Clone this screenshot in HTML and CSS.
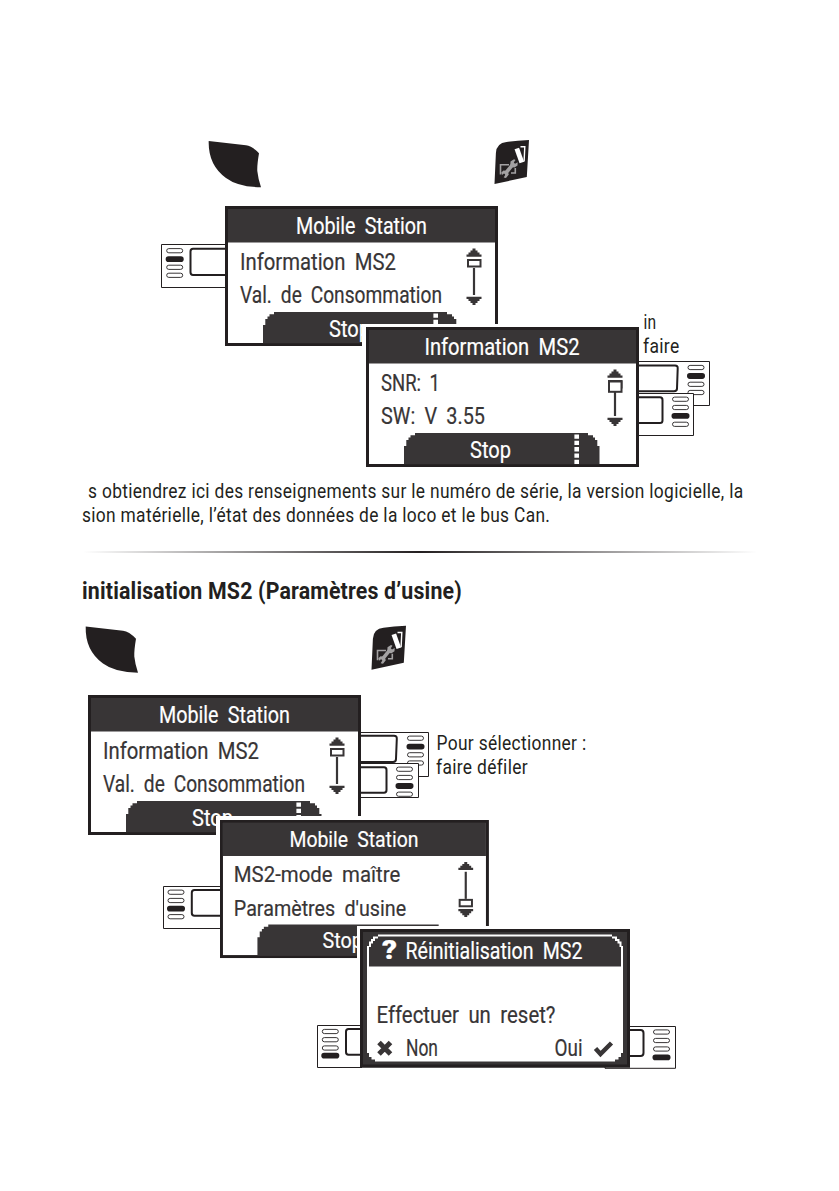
FILE: index.html
```html
<!DOCTYPE html>
<html lang="fr">
<head>
<meta charset="utf-8">
<title>Mobile Station 2</title>
<link rel="stylesheet" href="styles.css">
</head>
<body>
<svg class="defs" width="0" height="0" aria-hidden="true">
  <defs>
    <path id="wedge" d="M.7 0L38 4.3Q44 5 51 12.3Q49 24 49.3 30Q50 37 53 46.3Q30 46 18 37Q0 24 .7 0Z" fill="#231f20"/>
    <g id="toolkey">
      <path d="M0 44L1.4 13Q2 3 12 2Q22 .5 34.5 0L32.3 37Z" fill="#231f20"/>
      <path d="M6 34.5V24.8H14.5M20.8 28V33H16.5" fill="none" stroke="#a3a1a2" stroke-width="1.6"/>
      <path d="M10.5 34L19 23.5" stroke="#a3a1a2" stroke-width="3.6"/>
      <path d="M6.8 32.5L9 30.5L13 31L14.3 34.5L11.5 38L9.2 37.5L10.8 34.8L9.8 33.3L7.5 35ZM15.8 25.5L16 21.5L19.5 19.2L21 20L19.3 22.5L20.5 23.7L23.2 22.3L23 25.5L20 27.5L17.5 27.3Z" fill="#a3a1a2"/>
      <path d="M22.3 8.5L27.3 22.5" stroke="#fff" stroke-width="4.8"/>
      <path d="M26 6.8H30.3L29.6 21.5" fill="none" stroke="#fff" stroke-width="1.4"/>
    </g>
    <rect id="pill" x="-8" y="-2.1" width="16" height="4.2" rx="2.1" fill="#fff" stroke="#231f20" stroke-width=".9"/>
    <rect id="pill-on" x="-9" y="-2.9" width="18" height="5.8" rx="2.8" fill="#231f20"/>
    <path id="up" d="M-1.5 0H1.5V2H3.5V4H5.5V6H7.5V8.2H-7.5V6H-5.5V4H-3.5V2H-1.5Z" fill="#383536"/>
    <g id="frame">
      <rect x="1.5" y="1.5" width="270" height="137" fill="#fff" stroke="#231f20" stroke-width="3"/>
      <rect x="3" y="3" width="267" height="33.5" fill="#383536"/>
      <path d="M38 137.3V119H40.3V113H42.5V110.5H44.5V108.3H49V106H222V108.3H227V110.5H229V113H231.3V119H233.5V137.3Z" fill="#383536"/>
      <path d="M210.7 107.5V137" stroke="#fff" stroke-width="4.6" stroke-dasharray="4.3 2"/>
    </g>
    <g id="scroll-top">
      <use href="#up" x="249" y="42.5"/>
      <path d="M249 62V89" stroke="#383536" stroke-width="2.2"/>
      <rect x="243" y="54" width="12.5" height="6.5" fill="#fff" stroke="#383536" stroke-width="2"/>
      <use href="#up" transform="translate(249 99) scale(1 -1)"/>
    </g>
  </defs>
</svg>

<main class="page">
  <svg class="figure figure-info" viewBox="0 130 839 345">
    <use href="#wedge" x="208" y="141"/>
    <use href="#toolkey" x="494.5" y="140"/>

    <g class="unit">
      <path d="M228 244.5H161.5V287.5H228"/>
      <path class="button" d="M228 248.8H193Q190.5 248.8 190.5 251.5V272.3Q190.5 275 193 275H228"/>
      <use href="#pill" x="174.7" y="250.7"/><use href="#pill-on" x="174.7" y="259.2"/><use href="#pill" x="174.7" y="267.3"/><use href="#pill" x="174.7" y="275.3"/>
    </g>
    <g transform="translate(225 206)">
      <use href="#frame"/><use href="#scroll-top"/>
      <text class="lcd inv" x="71" y="28" textLength="131">Mobile Station</text>
      <text class="lcd" x="15" y="63.5" textLength="156">Information MS2</text>
      <text class="lcd" x="15" y="97" textLength="202">Val. de Consommation</text>
      <text class="lcd inv" x="104" y="130.5" textLength="41">Stop</text>
    </g>

    <path class="halo" d="M362 324H500V340H370V348H362Z"/>
    <g class="unit">
      <path d="M636 361.5H709.5V405.5H636Z"/>
      <path class="button" d="M636 365.5H675Q678 365.5 677.7 368.5L677 388.5Q677 391.3 674 391.3H636"/>
      <use href="#pill" x="696" y="367.5"/><use href="#pill-on" x="696" y="376"/><use href="#pill" x="696" y="384.3"/><use href="#pill" x="696" y="392.5"/>
      <path d="M636 393.5H693.5V435.5H636Z"/>
      <path class="button" d="M636 397.3H660Q662.5 397.3 662.5 400V420.5Q662.5 423 660 423H636"/>
      <use href="#pill" x="680.5" y="399.2"/><use href="#pill" x="680.5" y="407.5"/><use href="#pill-on" x="680.5" y="415.8"/><use href="#pill" x="680.5" y="424.3"/>
    </g>
    <g transform="translate(366 327)">
      <use href="#frame"/><use href="#scroll-top"/>
      <rect x="243" y="54.5" width="12.5" height="10.3" fill="#fff" stroke="#383536" stroke-width="2"/>
      <text class="lcd inv" x="58.5" y="28" textLength="155">Information MS2</text>
      <text class="lcd" x="15" y="63.5" textLength="59">SNR: 1</text>
      <text class="lcd" x="15" y="97" textLength="104">SW: V 3.55</text>
      <text class="lcd inv" x="104" y="130.5" textLength="41">Stop</text>
    </g>
    <text class="note" x="643.5" y="329.3" textLength="13">in</text>
    <text class="note" x="643" y="353" textLength="36.5">faire</text>
  </svg>

  <p class="copy"><span class="line first">s obtiendrez ici des renseignements sur le numéro de série, la version logicielle, la</span>
  <span class="line second">sion matérielle, l’état des données de la loco et le bus Can.</span></p>
  <hr class="rule">
  <h2 class="title"><span>initialisation MS2 (Paramètres d’usine)</span></h2>

  <svg class="figure figure-reset" viewBox="0 620 839 455">
    <use href="#wedge" x="85" y="626.5"/>
    <use href="#toolkey" x="371.5" y="625.7"/>

    <g class="unit">
      <path d="M358 732.5H428.5V776.5H358Z"/>
      <path class="button" d="M358 735.8H394Q397 735.8 396.8 738.8L396 759Q396 762 393 762H358"/>
      <use href="#pill" x="415.5" y="738.2"/><use href="#pill-on" x="415.5" y="746.6"/><use href="#pill" x="415.5" y="754.8"/><use href="#pill" x="415.5" y="763"/>
      <path d="M358 763.5H418.5V797.5H358Z"/>
      <path class="button" d="M358 767.3H384Q386.5 767.3 386.5 770V790Q386.5 792.8 384 792.8H358"/>
      <use href="#pill" x="404.5" y="769.2"/><use href="#pill" x="404.5" y="777.5"/><use href="#pill-on" x="404.5" y="786"/><use href="#pill" x="404.5" y="794.2"/>
    </g>
    <g transform="translate(88 695)">
      <use href="#frame"/><use href="#scroll-top"/>
      <text class="lcd inv" x="71" y="28" textLength="131">Mobile Station</text>
      <text class="lcd" x="15" y="63.5" textLength="156">Information MS2</text>
      <text class="lcd" x="15" y="97" textLength="202">Val. de Consommation</text>
      <text class="lcd inv" x="104" y="130.5" textLength="41">Stop</text>
    </g>
    <text class="note" x="436.5" y="750" textLength="150">Pour sélectionner :</text>
    <text class="note" x="436" y="774" textLength="92">faire défiler</text>

    <path class="halo" d="M216 816H364V830H224V838H216Z"/>
    <g class="unit">
      <path d="M222 886.5H163.5V928.5H222"/>
      <path class="button" d="M222 890H194.5Q191.8 890 191.8 892.7V913Q191.8 915.8 194.5 915.8H222"/>
      <use href="#pill" x="176" y="892.2"/><use href="#pill" x="176" y="900.5"/><use href="#pill-on" x="176" y="908.7"/><use href="#pill" x="176" y="916.7"/>
    </g>
    <g transform="translate(220 820) scale(.985 .986)">
      <use href="#frame"/>
      <use href="#up" x="249.5" y="42.5"/>
      <path d="M249.5 52.5V80" stroke="#383536" stroke-width="2.2"/>
      <rect x="243.3" y="81" width="12.5" height="6.5" fill="#fff" stroke="#383536" stroke-width="2"/>
      <use href="#up" transform="translate(249.5 98.5) scale(1 -1)"/>
      <text class="lcd inv" x="70.5" y="27.5" textLength="131">Mobile Station</text>
      <text class="lcd" x="14" y="63" textLength="169">MS2-mode maître</text>
      <text class="lcd" x="14" y="97" textLength="175">Paramètres d'usine</text>
      <text class="lcd inv" x="104" y="130" textLength="41">Stop</text>
    </g>

    <path class="halo" d="M357 926H491V935H364V960H357Z"/>
    <g class="unit">
      <path d="M362 1025.5H317.5V1067.5H362"/>
      <path class="button" d="M362 1029H348.5Q346 1029 346 1031.7V1052Q346 1054.8 348.5 1054.8H362"/>
      <use href="#pill" x="330.3" y="1031.5"/><use href="#pill" x="330.3" y="1039.7"/><use href="#pill" x="330.3" y="1048"/><use href="#pill-on" x="330.3" y="1055.7"/>
      <path d="M605 1026.5H675.5V1068.3H605Z"/>
      <path class="button" d="M628 1030H640.5Q643.5 1030 643.5 1033V1053Q643.5 1056 640.5 1056H628"/>
      <use href="#pill" x="661.5" y="1032"/><use href="#pill" x="661.5" y="1040.5"/><use href="#pill" x="661.5" y="1049"/><use href="#pill-on" x="661.5" y="1057.3"/>
    </g>
    <g transform="translate(360 929)">
      <path d="M0 0H270V138.7H0Z" fill="#231f20"/>
      <path d="M3 3H267V135.5H3Z" fill="#383536"/>
      <path d="M18 5.5H252V7.5H257V10H259.5V12.5H261.5V17H263V124H261V128H258.5V130.5H255V132.5H15V130.5H11.5V128H9V124H7V17H9V12.5H11V10H13V7.5H18Z" fill="#fff"/>
      <path d="M18 7.5H252V9.5H255V12H257.5V14.5H259.5V18H261V37.5H9V18H11V14.5H13V12H15V9.5H18Z" fill="#383536"/>
      <text class="lcd inv mark" x="22" y="30" textLength="15">?</text>
      <text class="lcd inv" x="45.5" y="29.5" textLength="177">Réinitialisation MS2</text>
      <text class="lcd" x="16.5" y="93.5" textLength="179">Effectuer un reset?</text>
      <path d="M19 113.5L30.5 125M30.5 113.5L19 125" stroke="#383536" stroke-width="5"/>
      <text class="lcd" x="46" y="127" textLength="32">Non</text>
      <text class="lcd" x="194.5" y="127" textLength="28">Oui</text>
      <path d="M235.5 119.5L240.5 125L251.5 114" fill="none" stroke="#383536" stroke-width="4.5"/>
    </g>
  </svg>
</main>
<script src="fit.js"></script>
</body>
</html>
```

FILE: fit.js
```js
// Condensed setting: every SVG label scales its glyphs to its textLength.
document.querySelectorAll('text[textLength]').forEach(function (label) {
  label.setAttribute('lengthAdjust', 'spacingAndGlyphs');
});
```

FILE: styles.css
```css
body {
  margin: 0;
  background: #fff;
  color: #231f20;
  font-family: Roboto, "Liberation Sans", sans-serif;
}

.defs {
  display: block;
}

.page {
  display: flex;
  flex-direction: column;
  width: 839px;
  height: 1191px;
  padding-top: 130px;
  box-sizing: border-box;
  overflow: hidden;
}

.figure {
  display: block;
  width: 839px;
  flex: none;
}

.figure-info {
  height: 345px;
}

.figure-reset {
  height: 455px;
}

.halo {
  fill: #fff;
}

.unit path {
  fill: #fff;
  stroke: #231f20;
  stroke-width: 1;
}

.unit .button {
  stroke-width: 2;
}

.lcd {
  font-size: 23px;
  word-spacing: 5px;
  fill: #383536;
  stroke: #383536;
  stroke-width: .2px;
}

.inv {
  fill: #fff;
  stroke: #fff;
}

.mark {
  font-size: 25px;
  font-weight: 900;
}

.note {
  font-size: 19.3px;
  letter-spacing: .36px;
  fill: #231f20;
}

.copy {
  display: flex;
  flex-direction: column;
  margin: 5px 0 0 82px;
  font-size: 19.3px;
  line-height: 24px;
  letter-spacing: .36px;
}

.line {
  width: max-content;
  white-space: nowrap;
  transform-origin: 0 50%;
  transform: scaleX(.9);
}

.first {
  margin-left: 6px;
}

.rule {
  width: 674px;
  height: 2px;
  margin: 23px 0 0 83px;
  border: 0;
  background: linear-gradient(90deg, transparent, #231f20 50%, transparent);
}

.title {
  height: 67px;
  margin: 0 0 0 82px;
  font-size: 23.7px;
  line-height: 77px;
  font-weight: 700;
  letter-spacing: .2px;
}

.title span {
  display: inline-block;
  white-space: nowrap;
  transform-origin: 0 50%;
  transform: scaleX(.9);
}
```
